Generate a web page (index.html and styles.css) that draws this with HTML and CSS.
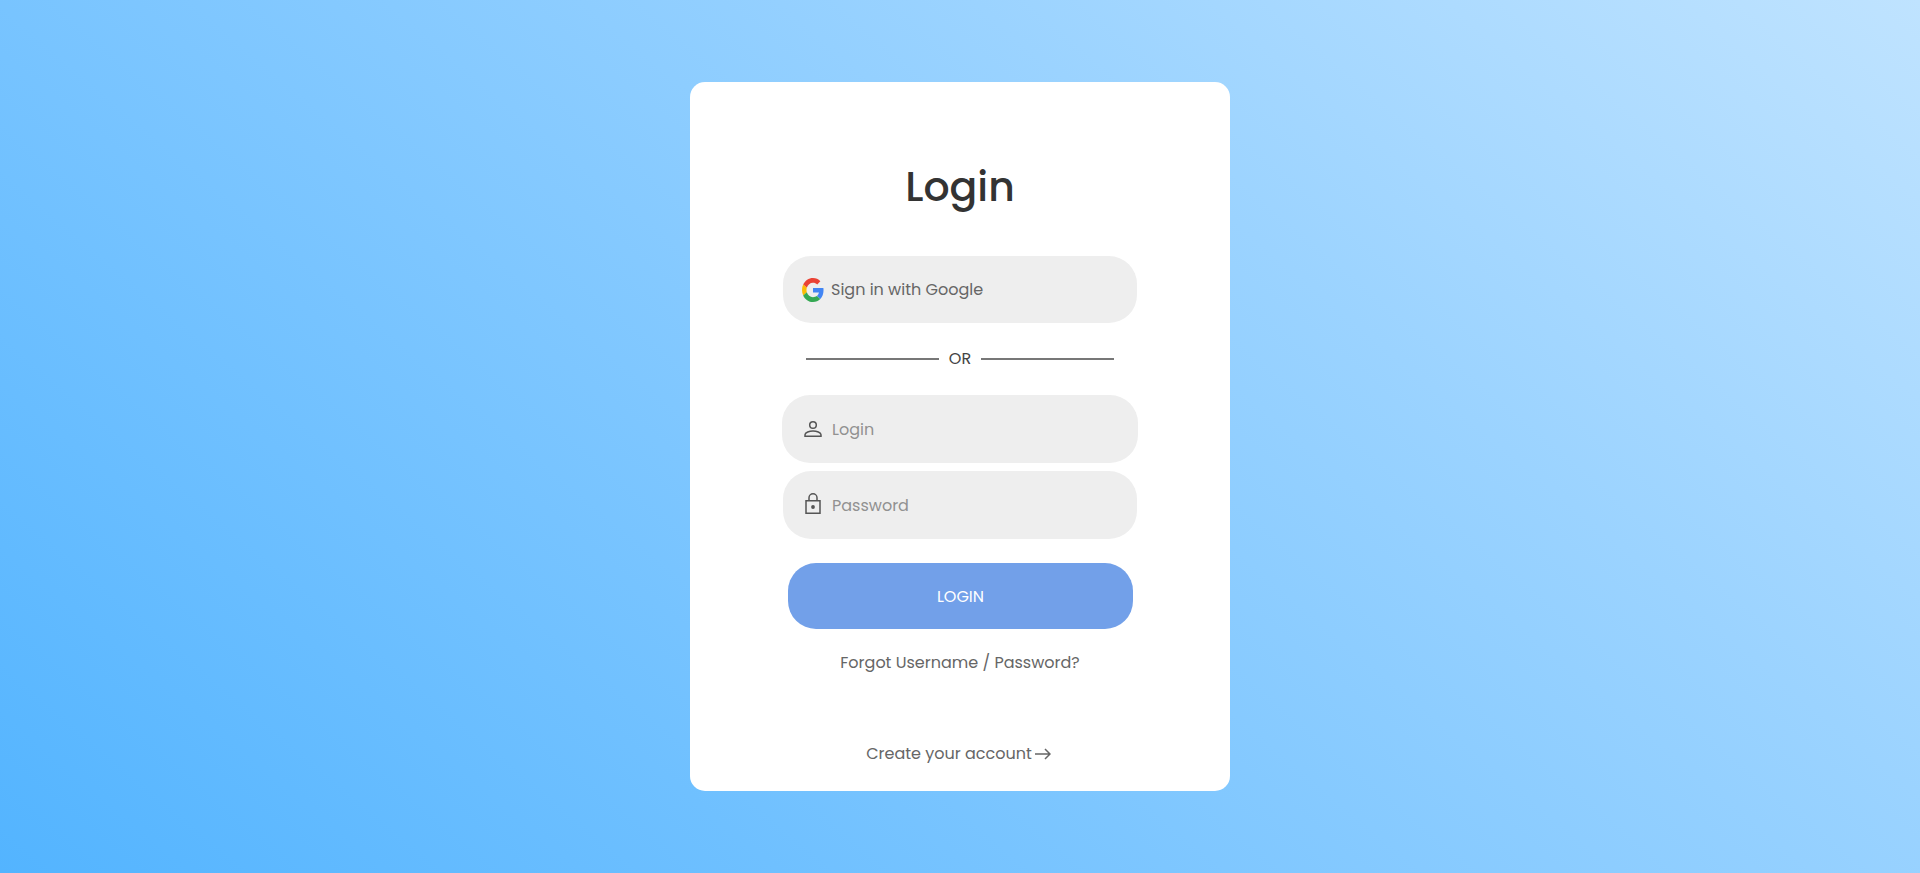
FILE: index.html
```html
<!DOCTYPE html>
<html lang="en">
<head>
<meta charset="utf-8">
<title>Login</title>
<link rel="stylesheet" href="styles.css">
</head>
<body>
<main class="card">
  <h1 class="title">Login</h1>
  <form class="form">
    <button class="google" type="button">
      <svg class="google-logo" viewBox="0 0 48 48" preserveAspectRatio="none" aria-hidden="true">
        <path fill="#ea4335" d="M24 9.5c3.54 0 6.71 1.22 9.21 3.6l6.85-6.85C35.9 2.38 30.47 0 24 0 14.62 0 6.51 5.38 2.56 13.22l7.98 6.19C12.43 13.72 17.74 9.5 24 9.5z"/>
        <path fill="#4285f4" d="M46.98 24.55c0-1.57-.15-3.09-.38-4.55H24v9.02h12.94c-.58 2.96-2.26 5.48-4.78 7.18l7.73 6c4.51-4.18 7.09-10.36 7.09-17.65z"/>
        <path fill="#fbbc05" d="M10.53 28.59c-.48-1.45-.76-2.99-.76-4.59s.27-3.14.76-4.59l-7.98-6.19C.92 16.46 0 20.12 0 24c0 3.88.92 7.54 2.56 10.78l7.97-6.19z"/>
        <path fill="#34a853" d="M24 48c6.48 0 11.93-2.13 15.89-5.81l-7.73-6c-2.15 1.45-4.92 2.3-8.16 2.3-6.26 0-11.57-4.22-13.47-9.91l-7.98 6.19C6.51 42.62 14.62 48 24 48z"/>
      </svg>
      <span>Sign in with Google</span>
    </button>
    <div class="divider"><span>OR</span></div>
    <div class="fields">
      <label class="field">
        <svg class="icon" viewBox="0 0 22 24" aria-hidden="true"><circle cx="11" cy="8" r="3.300"/><path d="M3 19.300v-1.600c0-2.400 4.500-3.700 8-3.700s8 1.300 8 3.700v1.600z"/></svg>
        <input type="text" placeholder="Login" aria-label="Login">
      </label>
      <label class="field password">
        <svg class="icon" viewBox="0 0 22 24" aria-hidden="true"><path d="M4 7.700h14v12.500H4zM7 7.700V4.800a4 4 0 0 1 8 0v2.900"/><circle class="dot" cx="11" cy="14" r="1.900"/></svg>
        <input type="password" placeholder="Password" aria-label="Password">
      </label>
    </div>
    <button class="submit" type="button">LOGIN</button>
  </form>
  <a class="link forgot" href="#">Forgot Username / Password?</a>
  <a class="link create" href="#">Create your account
    <svg class="arrow" viewBox="0 0 16 12" aria-hidden="true"><path d="M0 6h15M10 1l5 5-5 5"/></svg>
  </a>
</main>
</body>
</html>
```
FILE: styles.css
```css
* {
  box-sizing: border-box;
}

body {
  margin: 0;
  min-height: 100vh;
  display: flex;
  align-items: center;
  justify-content: center;
  font: 16px/24px Poppins, Inter, "Open Sans", sans-serif;
  color: #666;
  background: linear-gradient(40deg, #53b4ff 0%, #9bd3ff 68%, #bfe3ff 100%);
}

button,
input {
  font: inherit;
  border: 0;
}

.card {
  width: 540px;
  max-width: 100%;
  padding: 75px 92px 25px;
  display: flex;
  flex-direction: column;
  align-items: center;
  background: #fff;
  border-radius: 15px;
}

.title {
  margin: 0 0 39px;
  font-size: 41px;
  line-height: 60px;
  font-weight: 500;
  color: #333;
}

.form {
  width: 100%;
  display: flex;
  flex-direction: column;
}

.google {
  height: 67px;
  margin: 0 1px;
  padding: 0 19px;
  display: flex;
  align-items: center;
  gap: 7px;
  color: #666;
  background: #eee;
  border-radius: 28px;
}

.google-logo {
  width: 22px;
  height: 24px;
}

.divider {
  margin: 24px;
  display: flex;
  align-items: center;
  gap: 10px;
  color: #444;
}

.divider::before,
.divider::after {
  content: "";
  flex: 1;
  height: 2px;
  background: #777;
}

.fields {
  display: flex;
  flex-direction: column;
  gap: 8px;
}

.field {
  height: 68px;
  padding: 0 20px;
  display: flex;
  align-items: center;
  gap: 8px;
  background: #eee;
  border-radius: 28px;
}

.password {
  margin: 0 1px;
  padding: 0 19px;
}

.field input {
  flex: 1;
  min-width: 0;
  padding: 1px 0 0;
  background: transparent;
  outline: 0;
  color: #333;
}

.field input::placeholder {
  color: #919191;
  opacity: 1;
}

.icon {
  width: 22px;
  height: 24px;
  fill: none;
  stroke: #555;
  stroke-width: 1.500;
}

.dot {
  fill: #555;
  stroke: none;
}

.submit {
  height: 66px;
  margin: 24px 5px 0 6px;
  padding: 1px 0 0;
  color: #fff;
  background: #72a0e9;
  border-radius: 28px;
}

.link {
  display: flex;
  align-items: center;
  gap: 3px;
  color: #666;
  text-decoration: none;
}

.forgot {
  margin-top: 22px;
}

.create {
  margin-top: 67px;
  padding-right: 3px;
}

.arrow {
  width: 16px;
  height: 12px;
  fill: none;
  stroke: #666;
  stroke-width: 1.500;
}
```
